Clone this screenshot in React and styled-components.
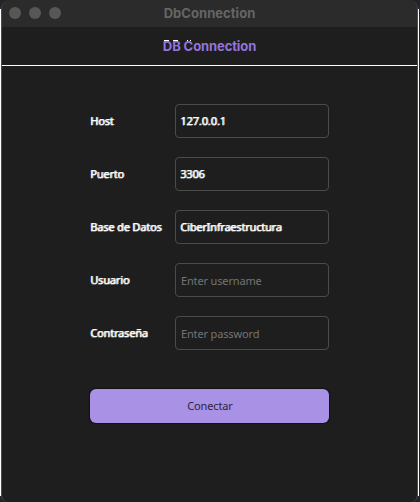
import React from 'react';
import styled, { createGlobalStyle } from 'styled-components';

const GlobalStyle = createGlobalStyle`
  * { box-sizing: border-box; }
  html, body { margin: 0; height: 502px; overflow: hidden; }
  body { background: #24232a; }
`;

const Backdrop = styled.div`
  width: 420px;
  height: 502px;
  padding: 0 2px 0 1px;
  background:
    linear-gradient(#fff, #fff) 0 9px / 1px 487px no-repeat,
    linear-gradient(#fff, #fff) 418px 9px / 1px 487px no-repeat,
    #24232a;
`;

const Window = styled.main`
  width: 417px;
  height: 502px;
  overflow: hidden;
  border: solid #4b4b4b;
  border-width: 0 1px;
  border-radius: 9px 9px 7px 7px;
  background: #1e1e1e;
`;

const TitleBar = styled.header`
  height: 27px;
  display: grid;
  grid-template-columns: 60px 1fr 60px;
  align-items: center;
  padding: 0 7px;
  background: #2b2b2b;
`;

const Controls = styled.div`
  display: flex;
  gap: 8px;
  margin-top: -1px;
`;

const Dot = styled.span`
  width: 12px;
  height: 12px;
  border-radius: 50%;
  background: #575757;
`;

const WindowTitle = styled.div`
  padding-bottom: 2px;
  color: #656565;
  font: 700 13px/24px Inter, sans-serif;
  letter-spacing: 0.05px;
  text-align: center;
  white-space: nowrap;
`;

const Heading = styled.h1`
  height: 39px;
  margin: 0;
  border-bottom: 1px solid #fff;
  color: #9274dd;
  font: 700 13px/38px Inter, sans-serif;
  letter-spacing: -0.1px;
  text-align: center;
`;

const HeadingText = styled.span`
  position: relative;
`;

const Fleck = styled.i`
  position: absolute;
  left: ${({ $x }) => $x}px;
  top: 2px;
  width: ${({ $w }) => $w}px;
  height: 1px;
  background: #fff;
`;

const Form = styled.form`
  width: 239px;
  margin: 38px 0 0 88px;
`;

const Field = styled.label`
  height: 34px;
  margin-bottom: ${({ $last }) => ($last ? 39 : 19)}px;
  display: grid;
  grid-template-columns: 85px 154px;
  align-items: center;
`;

const Caption = styled.span`
  color: #fff;
  font: 400 11px/16px "Noto Sans", sans-serif;
  letter-spacing: -0.17px;
  text-shadow: 1px 0 0 #ddd, 0 1px 0 rgba(255, 255, 255, 0.4);
  white-space: nowrap;
`;

const Input = styled.input`
  width: 154px;
  height: 34px;
  padding: ${({ $filled }) => ($filled ? '0 4px 1px' : '1px 5px 0')};
  border: 1px solid #4b4b4b;
  border-radius: 4px;
  outline: 0;
  background: transparent;
  color: #fff;
  font: 400 11px "Noto Sans", sans-serif;
  letter-spacing: ${({ $spacing }) => $spacing ?? -0.2}px;
  text-shadow: 1px 0 0 #ddd, 0 1px 0 rgba(255, 255, 255, 0.4);
  &::placeholder {
    color: #747474;
    opacity: 1;
    text-shadow: none;
  }
`;

const Submit = styled.button`
  display: block;
  width: 239px;
  height: 34px;
  padding: 0 0 1px 1px;
  border: 0;
  border-radius: 6px;
  background: #a991e6;
  box-shadow: 0 0 1px 1px #111018;
  color: #2b243c;
  font: 400 11px "Noto Sans", sans-serif;
  letter-spacing: -0.15px;
`;

const fields = [
  { label: 'Host', value: '127.0.0.1', valueSpacing: -0.1 },
  { label: 'Puerto', value: '3306' },
  { label: 'Base de Datos', value: 'CiberInfraestructura' },
  { label: 'Usuario', placeholder: 'Enter username' },
  { label: 'Contraseña', placeholder: 'Enter password' },
];

export default function App() {
  return (
    <>
      <GlobalStyle />
      <Backdrop>
        <Window>
          <TitleBar>
            <Controls><Dot /><Dot /><Dot /></Controls>
            <WindowTitle>DbConnection</WindowTitle>
          </TitleBar>
          <Heading>
            <HeadingText>
              DB Connection
              <Fleck $x={1} $w={5} />
              <Fleck $x={10} $w={5} />
              <Fleck $x={24} $w={1} />
              <Fleck $x={27} $w={1} />
            </HeadingText>
          </Heading>
          <Form onSubmit={(event) => event.preventDefault()}>
            {fields.map((field, index) => (
              <Field key={field.label} $last={index === fields.length - 1}>
                <Caption>{field.label}</Caption>
                <Input
                  defaultValue={field.value}
                  placeholder={field.placeholder}
                  $filled={Boolean(field.value)}
                  $spacing={field.value ? field.valueSpacing : -0.15}
                  spellCheck={false}
                />
              </Field>
            ))}
            <Submit type="submit">Conectar</Submit>
          </Form>
        </Window>
      </Backdrop>
    </>
  );
}
